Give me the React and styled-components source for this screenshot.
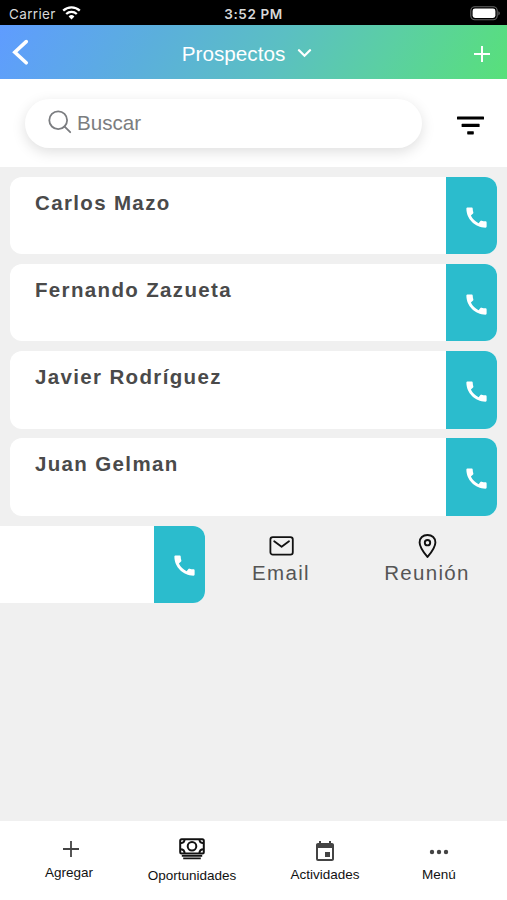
import React from "react";
import styled, { createGlobalStyle } from "styled-components";
import { MdCall, MdEvent } from "react-icons/md";

const GlobalStyle = createGlobalStyle`
  * {
    box-sizing: border-box;
  }
  body {
    margin: 0;
    font-family: "Liberation Sans", Arial, sans-serif;
  }
  svg {
    display: block;
    flex-shrink: 0;
  }
`

const Screen = styled.div`
  display: flex;
  flex-direction: column;
  width: 100%;
  height: 100vh;
  overflow: hidden;
  background-color: #f0f0f0;
`

const StatusBar = styled.div`
  display: grid;
  grid-template-columns: 1fr auto 1fr;
  align-items: center;
  height: 25px;
  flex-shrink: 0;
  padding: 2px 6px 0 9px;
  background-color: #000;
  color: #d8d8d8;
  font-family: Inter, "Liberation Sans", sans-serif;
  font-size: 13.5px;
`

const Carrier = styled.div`
  display: flex;
  align-items: center;
  gap: 6px;
  letter-spacing: 0.35px;

  svg {
    margin-top: -2px;
  }
`

const Clock = styled.div`
  padding-right: 3px;
  font-weight: 600;
  font-size: 13.5px;
  letter-spacing: 0.6px;
`

const BatteryHolder = styled.div`
  justify-self: end;
`

const Header = styled.header`
  display: grid;
  grid-template-columns: 60px 1fr 60px;
  align-items: center;
  height: 54px;
  flex-shrink: 0;
  padding: 0 16px 0 11px;
  background: linear-gradient(120deg, #5f9cff 0%, #5bafdc 30%, #5bbfc3 54%, #5bcfa3 75%, #58e07a 100%);
  color: white;
`

const HeaderButton = styled.button`
  display: flex;
  justify-self: ${(props) => props.$side};
  padding: ${(props) => (props.$side === "end" ? "4px 0 0" : "0")};
  border: none;
  background: none;
  color: inherit;
  cursor: pointer;
`

const HeaderTitle = styled.div`
  display: flex;
  align-items: center;
  justify-content: center;
  gap: 12px;
  padding: 3px 8px 0 0;
  font-size: 20.7px;
`

const SearchSection = styled.div`
  display: flex;
  align-items: center;
  justify-content: space-between;
  height: 88px;
  flex-shrink: 0;
  padding: 0 23px 0 25px;
  background-color: white;
`

const SearchBox = styled.label`
  display: flex;
  align-items: center;
  gap: 5px;
  width: 397px;
  height: 49px;
  padding-left: 23px;
  border-radius: 25px;
  background-color: white;
  box-shadow: 0 4px 14px rgba(0, 0, 0, 0.13);

  svg {
    margin-top: -2px;
  }
`

const SearchInput = styled.input`
  width: 300px;
  padding: 0;
  border: none;
  outline: none;
  background: none;
  color: #7b7d80;
  font-family: inherit;
  font-size: 20.6px;

  &::placeholder {
    color: #7b7d80;
    opacity: 1;
  }
`

const FilterButton = styled.button`
  padding: 4px 0 0;
  border: none;
  background: none;
  cursor: pointer;
`

const List = styled.div`
  display: flex;
  flex-direction: column;
  flex: 1;
  gap: 9.7px;
  padding: 9.8px 10px;
`

const Card = styled.div`
  display: flex;
  flex-shrink: 0;
  justify-content: space-between;
  width: ${(props) => props.$width || "auto"};
  height: 77.5px;
  margin-left: ${(props) => (props.$open ? "-10px" : "0")};
  border-radius: ${(props) => (props.$open ? "0 12px 12px 0" : "12px")};
  overflow: hidden;
  background-color: white;
`

const Name = styled.div`
  padding: 14px 0 0 25px;
  color: #4a4a4a;
  font-size: 20.5px;
  font-weight: bold;
  letter-spacing: 1.35px;
`

const CallButton = styled.button`
  display: flex;
  align-items: center;
  justify-content: center;
  width: 51.5px;
  padding: 3px 0 0 10px;
  border: none;
  background-color: #2bbccd;
  color: white;
  cursor: pointer;
`

const SwipedRow = styled.div`
  display: flex;
`

const Actions = styled.div`
  display: grid;
  grid-template-columns: 146px 146px;
  padding-left: 3px;
`

const Action = styled.div`
  display: flex;
  flex-direction: column;
  align-items: center;
  padding-top: 7px;
  color: #555;
  font-size: 20.5px;
  letter-spacing: 1.3px;
  line-height: 24px;

  svg {
    margin-bottom: 2px;
    color: #111;
  }
`

const TabBar = styled.nav`
  display: grid;
  grid-template-columns: 126px 120px 146px 82px;
  height: 79px;
  flex-shrink: 0;
  padding-left: 6px;
  background-color: white;
`

const Tab = styled.div`
  display: flex;
  flex-direction: column;
  align-items: center;
  padding-top: ${(props) => props.$top}px;
  color: #111;
  font-size: 13.5px;
  line-height: 16px;

  svg {
    margin-bottom: ${(props) => props.$gap}px;
    margin-left: ${(props) => props.$shift || 0}px;
    color: #444;
  }
`

const WifiIcon = () => (
  <svg width="19" height="14" viewBox="0 0 19 14" fill="none" stroke="#fff" strokeWidth="2.3">
    <path d="M1.2 4.7a12 12 0 0 1 16.6 0" />
    <path d="M4.2 8a7.7 7.7 0 0 1 10.6 0" />
    <path d="M9.5 13.4 6.6 10.5a4.2 4.2 0 0 1 5.8 0z" fill="#fff" stroke="none" />
  </svg>
)

const BatteryIcon = () => (
  <svg width="31" height="15" viewBox="0 0 31 15">
    <rect x="0.8" y="0.8" width="26.4" height="13" rx="4" fill="none" stroke="#666" strokeWidth="1.1" />
    <rect x="2.6" y="2.6" width="22.8" height="9.4" rx="2.4" fill="#fff" />
    <path d="M28.4 5.2c1.9.7 1.9 3.5 0 4.2z" fill="#666" />
  </svg>
)

const BackIcon = () => (
  <svg width="18" height="26" viewBox="0 0 18 26" fill="none" stroke="currentColor" strokeWidth="3.6" strokeLinecap="round">
    <path d="M15.2 2.6 3.8 13.2l11.4 10.6" />
  </svg>
)

const ChevronIcon = () => (
  <svg width="15" height="10" viewBox="0 0 15 10" fill="none" stroke="currentColor" strokeWidth="2.3" strokeLinecap="round">
    <path d="m2 1.3 5.5 5.4L13 1.3" />
  </svg>
)

const PlusIcon = ({ size, stroke }) => (
  <svg width={size} height={size} viewBox="0 0 18 18" fill="none" stroke="currentColor" strokeWidth={stroke}>
    <path d="M9 1v16M1 9h16" />
  </svg>
)

const SearchIcon = () => (
  <svg width="24" height="24" viewBox="0 0 24 24" fill="none" stroke="#7b7d80" strokeWidth="1.8" strokeLinecap="round">
    <circle cx="10.2" cy="10.2" r="8.9" />
    <path d="m16.4 16.4 5.8 5.8" />
  </svg>
)

const FilterIcon = () => (
  <svg width="27" height="19" viewBox="0 0 27 19" fill="#000">
    <rect x="0" y="0.4" width="27" height="3.2" rx="0.6" />
    <rect x="4.6" y="7.8" width="18" height="3.2" rx="0.6" />
    <rect x="10.2" y="15.2" width="6.6" height="3.2" rx="0.6" />
  </svg>
)

const MailIcon = () => (
  <svg width="26" height="26" viewBox="0 0 26 26" fill="none" stroke="currentColor" strokeWidth="1.8" strokeLinecap="round" strokeLinejoin="round">
    <rect x="2.4" y="4.2" width="22.4" height="17.4" rx="2.4" />
    <path d="m6.2 8.2 7.4 5.6 7.4-5.6" />
  </svg>
)

const PinIcon = () => (
  <svg width="26" height="26" viewBox="0 0 26 26" fill="none" stroke="currentColor" strokeWidth="1.9" strokeLinejoin="round">
    <path d="M13.5 24c-1-1.2-7.9-9.4-7.9-14.6C5.6 5 8.9 2 13.5 2s7.9 3 7.9 7.4c0 5.2-6.9 13.4-7.9 14.6z" />
    <circle cx="13.5" cy="9.7" r="2.7" />
  </svg>
)

const CashIcon = () => (
  <svg width="26" height="22" viewBox="0 0 26 22" fill="none" stroke="#111" strokeWidth="2">
    <rect x="1.2" y="1.2" width="23.6" height="14.2" rx="1.5" />
    <circle cx="13" cy="8.2" r="4.3" />
    <path d="M1.2 5.2c2.7 0 4.4-1.6 4.4-4.2M20.4 1c0 2.6 1.7 4.2 4.4 4.2M1.2 11.2c2.7 0 4.4 1.6 4.4 4.2M20.4 15.4c0-2.6 1.7-4.2 4.4-4.2" />
    <path d="M2.8 17.8h20.4M4.2 20.4h17.6" strokeWidth="1.8" />
  </svg>
)

const DotsIcon = () => (
  <svg width="20" height="6" viewBox="0 0 20 6" fill="currentColor">
    <circle cx="3" cy="3" r="2.2" />
    <circle cx="10" cy="3" r="2.2" />
    <circle cx="17" cy="3" r="2.2" />
  </svg>
)

const prospectos = ["Carlos Mazo", "Fernando Zazueta", "Javier Rodríguez", "Juan Gelman"];

export default class App extends React.Component {
  state = {
    search: "",
  };

  newSearch = (e) => {
    this.setState({ search: e.target.value });
  };

  render() {
    const filtered = prospectos.filter((name) =>
      name.toLowerCase().includes(this.state.search.toLowerCase())
    );

    return (
      <Screen>
        <GlobalStyle />
        <StatusBar>
          <Carrier>
            Carrier
            <WifiIcon />
          </Carrier>
          <Clock>3:52 PM</Clock>
          <BatteryHolder>
            <BatteryIcon />
          </BatteryHolder>
        </StatusBar>
        <Header>
          <HeaderButton $side="start"><BackIcon /></HeaderButton>
          <HeaderTitle>
            Prospectos
            <ChevronIcon />
          </HeaderTitle>
          <HeaderButton $side="end"><PlusIcon size={18} stroke={2} /></HeaderButton>
        </Header>
        <SearchSection>
          <SearchBox>
            <SearchIcon />
            <SearchInput
              placeholder="Buscar"
              value={this.state.search}
              onChange={this.newSearch}
            />
          </SearchBox>
          <FilterButton><FilterIcon /></FilterButton>
        </SearchSection>
        <List>
          {filtered.map((name) => (
            <Card key={name}>
              <Name>{name}</Name>
              <CallButton><MdCall size={27} /></CallButton>
            </Card>
          ))}
          {/* last row is swiped open */}
          <SwipedRow>
            <Card $open $width="205px">
              <Name />
              <CallButton><MdCall size={27} /></CallButton>
            </Card>
            <Actions>
              <Action>
                <MailIcon />
                Email
              </Action>
              <Action>
                <PinIcon />
                Reunión
              </Action>
            </Actions>
          </SwipedRow>
        </List>
        <TabBar>
          <Tab $top={19} $gap={7} $shift={4}>
            <PlusIcon size={18} stroke={1.8} />
            Agregar
          </Tab>
          <Tab $top={17} $gap={8}>
            <CashIcon />
            Oportunidades
          </Tab>
          <Tab $top={19} $gap={3}>
            <MdEvent size={24} />
            Actividades
          </Tab>
          <Tab $top={28} $gap={12}>
            <DotsIcon />
            Menú
          </Tab>
        </TabBar>
      </Screen>
    );
  }
}
